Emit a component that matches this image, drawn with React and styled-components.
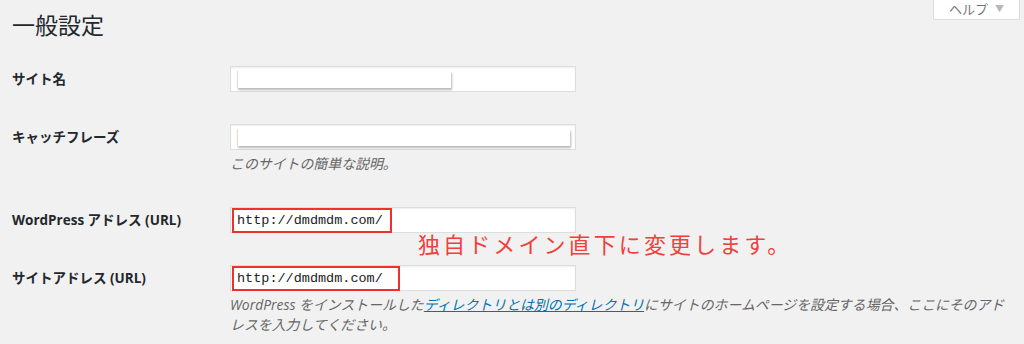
import React from "react";
import styled, { createGlobalStyle } from "styled-components";

const Global = createGlobalStyle`
  html, body { margin: 0; padding: 0; background: #f1f1f1; }
  body {
    font-family: "Open Sans", "Noto Sans CJK JP", sans-serif;
    color: #23282d;
    overflow: hidden;
  }
`;

const Page = styled.div`
  width: 1024px;
  height: 344px;
  padding-left: 12px;
  box-sizing: border-box;
`;

const Header = styled.div`
  display: flex;
  justify-content: space-between;
  align-items: flex-start;
  padding-right: 4px;
`;

const Title = styled.h1`
  margin: 9px 0 0;
  font-size: 23px;
  line-height: 30px;
  font-weight: 400;
  color: #23282d;
  font-family: "Noto Sans CJK JP", sans-serif;
`;

const HelpTab = styled.div`
  width: 87px;
  height: 20px;
  box-sizing: border-box;
  background: #fff;
  border: 1px solid #ddd;
  border-top: none;
  display: flex;
  align-items: center;
  justify-content: center;
  gap: 7px;
  font-size: 13px;
  line-height: 14px;
  color: #72777c;
  font-family: "Noto Sans CJK JP", sans-serif;
  padding-bottom: 1px;
`;

const Caret = styled.span`
  font-size: 9px;
  color: #b4b9be;
`;

const Form = styled.div`
  margin-top: 11px;
`;

const Row = styled.div`
  display: grid;
  grid-template-columns: 218px 346px;
  padding: 16px 0 ${(p) => p.$pb || 16}px;
`;

const Label = styled.div`
  font-size: 13.5px;
  font-weight: 700;
  line-height: 26px;
  color: #23282d;
  white-space: nowrap;
`;

const Field = styled.div`
  position: relative;
`;

const Input = styled.div`
  height: 26px;
  box-sizing: border-box;
  background: #fff;
  border: 1px solid #ddd;
  box-shadow: inset 0 1px 2px rgba(0, 0, 0, 0.07);
  position: relative;
  display: flex;
  align-items: center;
  padding-left: 6px;
`;

const Redacted = styled.span`
  display: block;
  width: ${(p) => p.$w}px;
  height: 17px;
  background: #fff;
  box-shadow: 1px 2px 2px rgba(0, 0, 0, 0.28);
  border-left: 1px solid #e6dccd;
`;

const UrlText = styled.span`
  font-family: "Liberation Mono", monospace;
  font-size: 13.5px;
  color: #222;
`;

const Highlight = styled.span`
  position: absolute;
  left: 2px;
  top: ${(p) => p.$top}px;
  width: ${(p) => p.$w}px;
  height: 25px;
  box-sizing: border-box;
  border: 2px solid #f0302a;
`;

const Desc = styled.p`
  margin: ${(p) => p.$mt}px 0 0;
  font-size: 13.9px;
  line-height: 20px;
  font-style: italic;
  color: #666;
  white-space: nowrap;
`;

const Link = styled.a`
  color: #0073aa;
  text-decoration: underline;
`;

const Annotation = styled.div`
  position: absolute;
  left: 188px;
  top: 24px;
  font-family: "Noto Sans CJK JP", sans-serif;
  font-size: 22px;
  line-height: 24px;
  letter-spacing: 3.1px;
  color: #f0403c;
  white-space: nowrap;
`;

export default function App() {
  return (
    <Page>
      <Global />
      <Header>
        <Title>一般設定</Title>
        <HelpTab>
          ヘルプ <Caret>▼</Caret>
        </HelpTab>
      </Header>
      <Form>
        <Row>
          <Label>サイト名</Label>
          <Field>
            <Input>
              <Redacted $w={213} />
            </Input>
          </Field>
        </Row>
        <Row $pb={17}>
          <Label>キャッチフレーズ</Label>
          <Field>
            <Input>
              <Redacted $w={332} />
            </Input>
            <Desc $mt={4}>このサイトの簡単な説明。</Desc>
          </Field>
        </Row>
        <Row>
          <Label>WordPress アドレス (URL)</Label>
          <Field>
            <Input>
              <UrlText>http://dmdmdm.com/</UrlText>
            </Input>
            <Highlight $top={1} $w={160} />
            <Annotation>独自ドメイン直下に変更します。</Annotation>
          </Field>
        </Row>
        <Row>
          <Label>サイトアドレス (URL)</Label>
          <Field>
            <Input>
              <UrlText>http://dmdmdm.com/</UrlText>
            </Input>
            <Highlight $top={1} $w={168} />
            <Desc $mt={4}>
              WordPress をインストールした
              <Link href="#">ディレクトリとは別のディレクトリ</Link>
              にサイトのホームページを設定する場合、ここにそのアド
              <br />
              レスを入力してください。
            </Desc>
          </Field>
        </Row>
      </Form>
    </Page>
  );
}
